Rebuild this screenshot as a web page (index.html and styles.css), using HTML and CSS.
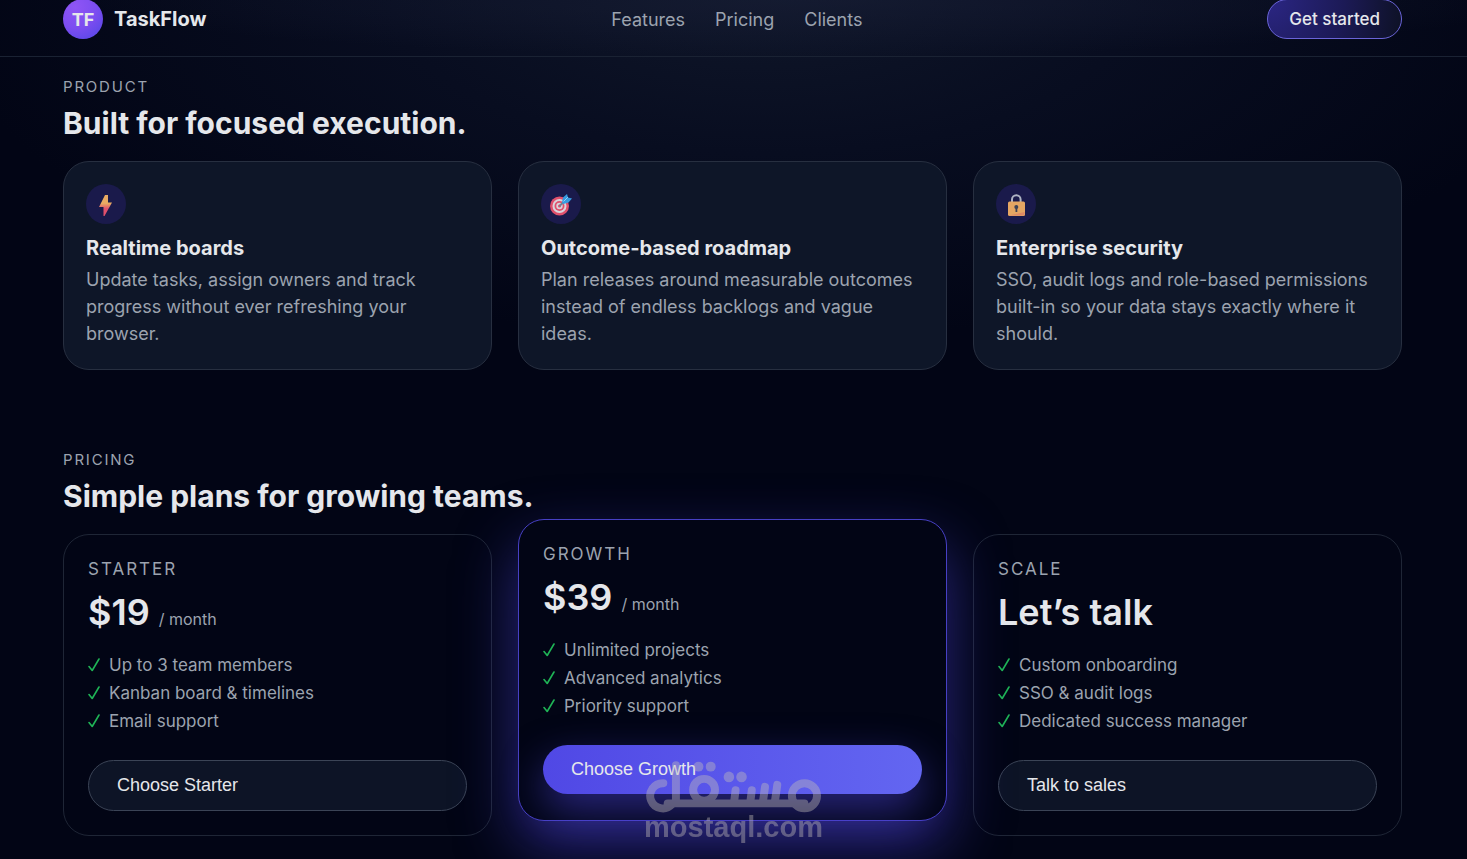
FILE: index.html
```
<!DOCTYPE html>
<html lang="en">

<head>
    <meta charset="UTF-8">
    <meta name="viewport" content="width=device-width, initial-scale=1.0">
    <title>TaskFlow</title>
    <link rel="stylesheet" href="styles.css">
</head>

<body>
    <svg class="sprite" aria-hidden="true">
        <symbol id="check" viewBox="0 0 12 14">
            <path d="M1 8.5 L4.2 12.5 L11 1" fill="none" stroke="#1fb456" stroke-width="1.6" stroke-linecap="round" stroke-linejoin="round" />
        </symbol>
    </svg>

    <header class="header">
        <a class="brand" href="#">
            <span class="brand-mark">TF</span>
            <span class="brand-name">TaskFlow</span>
        </a>
        <nav class="nav">
            <a href="#features">Features</a>
            <a href="#pricing">Pricing</a>
            <a href="#clients">Clients</a>
        </nav>
        <a class="header-cta" href="#pricing">Get started</a>
    </header>

    <main>
        <section class="section" id="features">
            <p class="eyebrow">Product</p>
            <h2 class="section-title">Built for focused execution.</h2>
            <div class="grid">
                <article class="feature">
                    <div class="feature-icon">
                        <svg viewBox="0 0 24 24" width="24" height="24" aria-hidden="true">
                            <defs>
                                <linearGradient id="bolt" x1="0" y1="0" x2="0" y2="1">
                                    <stop offset="0.4" stop-color="#e9ab62" />
                                    <stop offset="0.65" stop-color="#e0506c" />
                                </linearGradient>
                            </defs>
                            <path d="M11 3h3v7.500h4L10.500 24H9.500V15H5z" fill="url(#bolt)" />
                        </svg>
                    </div>
                    <h3>Realtime boards</h3>
                    <p>Update tasks, assign owners and track progress without ever refreshing your browser.</p>
                </article>
                <article class="feature">
                    <div class="feature-icon">
                        <svg viewBox="0 0 24 24" width="24" height="24" aria-hidden="true">
                            <circle cx="10.500" cy="14" r="9.500" fill="#e0506c" />
                            <circle cx="10.500" cy="14" r="7" fill="#d9d5dc" />
                            <circle cx="10.500" cy="14" r="5" fill="#e0506c" />
                            <circle cx="10.500" cy="14" r="3.200" fill="#d9d5dc" />
                            <circle cx="10.500" cy="14" r="1.500" fill="#e0506c" />
                            <path d="M10.500 14L16 8.500" stroke="#6f7f96" stroke-width="2" />
                            <path d="M13 10.500l1-5 4-3.500 1 3.500 4 1-3.500 4-5 1.500z" fill="#379be0" />
                            <path d="M14.500 9.500L19 5" stroke="#8ed0f5" stroke-width="1" />
                        </svg>
                    </div>
                    <h3>Outcome-based roadmap</h3>
                    <p>Plan releases around measurable outcomes instead of endless backlogs and vague ideas.</p>
                </article>
                <article class="feature">
                    <div class="feature-icon">
                        <svg viewBox="0 0 24 24" width="24" height="24" aria-hidden="true">
                            <path d="M8 11V7.500a4.300 4.300 0 0 1 8.600 0V11" fill="none" stroke="#aeb3c4" stroke-width="2" />
                            <rect x="4" y="9.500" width="17" height="14.500" rx="1.500" fill="#e5a663" />
                            <path d="M5 23.500L20.500 20v2.500q0 1-1 1z" fill="#e08a66" />
                            <circle cx="12.300" cy="15" r="2" fill="#3e4256" />
                            <path d="M11.500 15h1.800v5h-1.800z" fill="#3e4256" />
                        </svg>
                    </div>
                    <h3>Enterprise security</h3>
                    <p>SSO, audit logs and role-based permissions built-in so your data stays exactly where it should.</p>
                </article>
            </div>
        </section>

        <section class="section" id="pricing">
            <p class="eyebrow">Pricing</p>
            <h2 class="section-title">Simple plans for growing teams.</h2>
            <div class="grid">
                <article class="plan">
                    <h3 class="plan-name">Starter</h3>
                    <p class="price">$19 <span>/ month</span></p>
                    <ul class="perks">
                        <li><svg><use href="#check" /></svg>Up to 3 team members</li>
                        <li><svg><use href="#check" /></svg>Kanban board &amp; timelines</li>
                        <li><svg><use href="#check" /></svg>Email support</li>
                    </ul>
                    <button class="btn" type="button">Choose Starter</button>
                </article>
                <article class="plan plan-featured">
                    <h3 class="plan-name">Growth</h3>
                    <p class="price">$39 <span>/ month</span></p>
                    <ul class="perks">
                        <li><svg><use href="#check" /></svg>Unlimited projects</li>
                        <li><svg><use href="#check" /></svg>Advanced analytics</li>
                        <li><svg><use href="#check" /></svg>Priority support</li>
                    </ul>
                    <button class="btn btn-primary" type="button">Choose Growth</button>
                </article>
                <article class="plan">
                    <h3 class="plan-name">Scale</h3>
                    <p class="price">Let’s talk</p>
                    <ul class="perks">
                        <li><svg><use href="#check" /></svg>Custom onboarding</li>
                        <li><svg><use href="#check" /></svg>SSO &amp; audit logs</li>
                        <li><svg><use href="#check" /></svg>Dedicated success manager</li>
                    </ul>
                    <button class="btn" type="button">Talk to sales</button>
                </article>
            </div>
        </section>
    </main>

    <div class="watermark">
        <svg viewBox="45 60 528 160" width="176" height="53" aria-hidden="true">
            <g fill="none" stroke="#c2beb9" stroke-width="24" stroke-linecap="round">
                <circle cx="523" cy="168" r="38" />
                <circle cx="220" cy="150" r="33" />
                <path d="M97 130A38 38 0 1 0 123 194" />
                <path d="M135 76V184" />
                <path d="M110 191H523" />
                <path d="M315 151L311 184M364 151L360 184M404 141L398 184M441 135L434 184" />
            </g>
            <g fill="#c2beb9">
                <circle cx="203" cy="80" r="15" />
                <circle cx="240" cy="80" r="15" />
                <circle cx="295" cy="111" r="16" />
                <circle cx="333" cy="111" r="16" />
            </g>
        </svg>
        <span>mostaql.com</span>
    </div>
</body>

</html>
```
FILE: styles.css
```
* {
    box-sizing: border-box;
}

body {
    margin: 0;
    min-height: 100vh;
    background: radial-gradient(ellipse 56% 340px at 52% 0, #0f1629 0%, #080d20 45%, #020515 100%) no-repeat #020515;
    color: #e5e7eb;
    font-family: Inter, "Liberation Sans", sans-serif;
    font-size: 18px;
    line-height: 27px;
}

h2,
h3,
p,
ul {
    margin: 0;
    padding: 0;
}

a {
    color: inherit;
    text-decoration: none;
}

.sprite {
    position: absolute;
    width: 0;
    height: 0;
}

.header {
    display: flex;
    align-items: center;
    justify-content: space-between;
    margin-top: -1px;
    padding: 0 65px 17px 63px;
    border-bottom: 1px solid #1a2233;
    background: radial-gradient(ellipse 50% 100% at 55% 0, rgba(24, 30, 54, 0.6), transparent);
}

.brand {
    display: flex;
    align-items: center;
    gap: 11px;
    font-weight: 700;
}

.brand-mark {
    display: flex;
    align-items: center;
    justify-content: center;
    width: 40px;
    height: 40px;
    border-radius: 50%;
    background: radial-gradient(circle at 30% 20%, #8f55f5, #7c4df0 50%, #4f46e5);
}

.brand-name {
    font-size: 20px;
}

.nav {
    display: flex;
    gap: 30px;
    color: #9ca3af;
}

.header-cta {
    padding: 6px 21px 5px;
    border: 1px solid #6a64d8;
    border-radius: 20px;
    background: radial-gradient(circle at 0 0, #2b2684, #1c1a56 55%, #0d1124);
    font-size: 17px;
    font-weight: 500;
}

.section {
    padding: 16px 65px 0 63px;
}

.section + .section {
    padding-top: 76px;
}

.eyebrow {
    color: #9ca3af;
    font-size: 15px;
    letter-spacing: 0.12em;
    text-transform: uppercase;
}

.section-title {
    margin-bottom: 15px;
    font-size: 30px;
    font-weight: 700;
    line-height: 46px;
}

.grid {
    display: grid;
    grid-template-columns: repeat(3, 1fr);
    gap: 26px;
}

.feature {
    padding: 22px;
    border: 1px solid #272f40;
    border-radius: 26px;
    background: #0e1628;
}

.feature-icon {
    display: flex;
    align-items: center;
    justify-content: center;
    width: 40px;
    height: 40px;
    border-radius: 50%;
    background: #1a1a4b;
}

.feature h3 {
    margin: 9px 0 3px;
    font-size: 20px;
    line-height: 30px;
}

.feature p {
    color: #9ca3af;
}

.plan {
    padding: 21px 24px 24px;
    border: 1px solid #1f2636;
    border-radius: 26px;
    background: #020515;
}

.plan-featured {
    transform: translateY(-15px);
    border-color: #4740c4;
    box-shadow: 0 26px 60px rgba(79, 70, 229, 0.5);
}

.plan-name {
    color: #9ca3af;
    font-size: 17px;
    font-weight: 400;
    letter-spacing: 2px;
    text-transform: uppercase;
}

.price {
    margin: 0 0 10px;
    font-size: 36px;
    font-weight: 600;
    line-height: 58px;
}

.price span {
    color: #9ca3af;
    font-size: 16px;
    font-weight: 400;
    line-height: 16px;
}

.perks {
    margin-bottom: 25px;
    color: #9ca3af;
    font-size: 17px;
    line-height: 28px;
    list-style: none;
}

.perks li {
    display: flex;
    align-items: center;
    gap: 9px;
}

.perks svg {
    width: 12px;
    height: 14px;
}

.btn {
    display: block;
    width: 100%;
    padding: 11px 28px;
    border: 1px solid #3b4456;
    border-radius: 26px;
    background: #0d1426;
    color: #e5e7eb;
    font-family: "Liberation Sans", Arial, sans-serif;
    font-size: 18px;
    line-height: 27px;
    text-align: left;
    cursor: pointer;
}

.btn-primary {
    border: none;
    background: linear-gradient(90deg, #5048e5, #6366f1);
    box-shadow: 0 16px 40px rgba(79, 70, 229, 0.5);
}

.watermark {
    position: fixed;
    bottom: 18px;
    left: 50%;
    display: flex;
    flex-direction: column;
    align-items: center;
    transform: translateX(-50%);
    color: #c2beb9;
    font-family: "Liberation Sans", Arial, sans-serif;
    font-size: 29px;
    font-weight: 700;
    line-height: 28px;
    opacity: 0.41;
    pointer-events: none;
}

.watermark svg {
    display: block;
}
```
